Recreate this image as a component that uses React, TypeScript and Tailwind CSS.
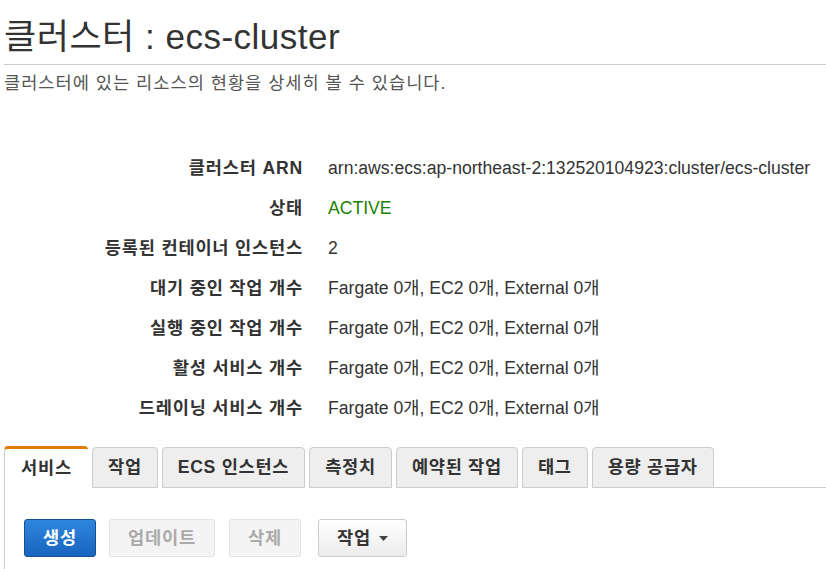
import { FC } from "react";

const font = "font-['Liberation_Sans','Noto_Sans_CJK_KR',sans-serif]";

const details: [string, string][] = [
  ["클러스터 ARN", "arn:aws:ecs:ap-northeast-2:132520104923:cluster/ecs-cluster"],
  ["상태", "ACTIVE"],
  ["등록된 컨테이너 인스턴스", "2"],
  ["대기 중인 작업 개수", "Fargate 0개, EC2 0개, External 0개"],
  ["실행 중인 작업 개수", "Fargate 0개, EC2 0개, External 0개"],
  ["활성 서비스 개수", "Fargate 0개, EC2 0개, External 0개"],
  ["드레이닝 서비스 개수", "Fargate 0개, EC2 0개, External 0개"],
];

const tabs = ["서비스", "작업", "ECS 인스턴스", "측정치", "예약된 작업", "태그", "용량 공급자"];

const DetailRow: FC<{ label: string; value: string }> = ({ label, value }) => (
  <div className="flex h-[40px] items-center">
    <div className="w-[303px] shrink-0 text-right font-bold text-[17.6px] tracking-[0.8px] text-[#333]">
      {label}
    </div>
    <div className={`pl-[25px] text-[17.6px] ${value === "ACTIVE" ? "text-[#1d8102]" : "text-[#333]"}`}>
      {value}
    </div>
  </div>
);

const App: FC = () => {
  return (
    <div className={`${font} w-[826px] h-[569px] overflow-hidden bg-white pl-[4px]`}>
      <h1 className="pt-[14px] text-[35px] leading-[46px] tracking-[0.5px] text-[#333] whitespace-nowrap">
        클러스터 : ecs-cluster
      </h1>
      <div className="mt-[4px] border-t border-[#ccc]" />
      <p className="mt-[6px] text-[17.6px] leading-[24px] tracking-[1px] text-[#555]">
        클러스터에 있는 리소스의 현황을 상세히 볼 수 있습니다.
      </p>

      <div className="mt-[53px] -ml-[4px]">
        {details.map(([l, v]) => (
          <DetailRow key={l} label={l} value={v} />
        ))}
      </div>

      <div className="mt-[18px] flex items-end">
        {tabs.map((t, i) =>
          i === 0 ? (
            <div
              key={t}
              className="h-[42px] w-[84px] shrink-0 flex items-center justify-center rounded-t-[4px] border-t-[3px] border-t-[#e07b00] border-l border-l-[#ccc] bg-white text-[17.6px] tracking-[0.8px] font-bold text-[#333]"
            >
              {t}
            </div>
          ) : (
            <div
              key={t}
              className="ml-[4px] h-[41px] shrink-0 flex items-center rounded-t-[4px] border border-[#ccc] bg-[#eee] px-[15px] text-[17.6px] tracking-[0.7px] font-bold text-[#333]"
            >
              {t}
            </div>
          )
        )}
        <div className="flex-1 border-b border-[#ccc]" />
      </div>

      <div className="border-l border-[#ccc] pl-[19px] pt-[31px] pb-[20px]">
        <div className="flex items-center tracking-[0.8px]">
          <button className="h-[38px] rounded-[3px] border border-[#15508f] bg-gradient-to-b from-[#2f86dc] to-[#1864bf] px-[18px] text-[17.6px] font-bold text-white">
            생성
          </button>
          <button className="ml-[13px] h-[38px] rounded-[3px] border border-[#e3e3e3] bg-[#f4f4f4] px-[18px] text-[17.6px] font-bold text-[#aaa]">
            업데이트
          </button>
          <button className="ml-[14px] h-[38px] rounded-[3px] border border-[#e3e3e3] bg-[#f4f4f4] px-[18px] text-[17.6px] font-bold text-[#aaa]">
            삭제
          </button>
          <button className="ml-[17px] h-[38px] flex items-center gap-[8px] rounded-[3px] border border-[#ccc] bg-gradient-to-b from-white to-[#ececec] px-[18px] text-[17.6px] font-bold text-[#333]">
            작업
            <svg width="9" height="5" viewBox="0 0 9 5">
              <path d="M0 0h9L4.5 5z" fill="#444" />
            </svg>
          </button>
        </div>
      </div>
    </div>
  );
};

export default App;
